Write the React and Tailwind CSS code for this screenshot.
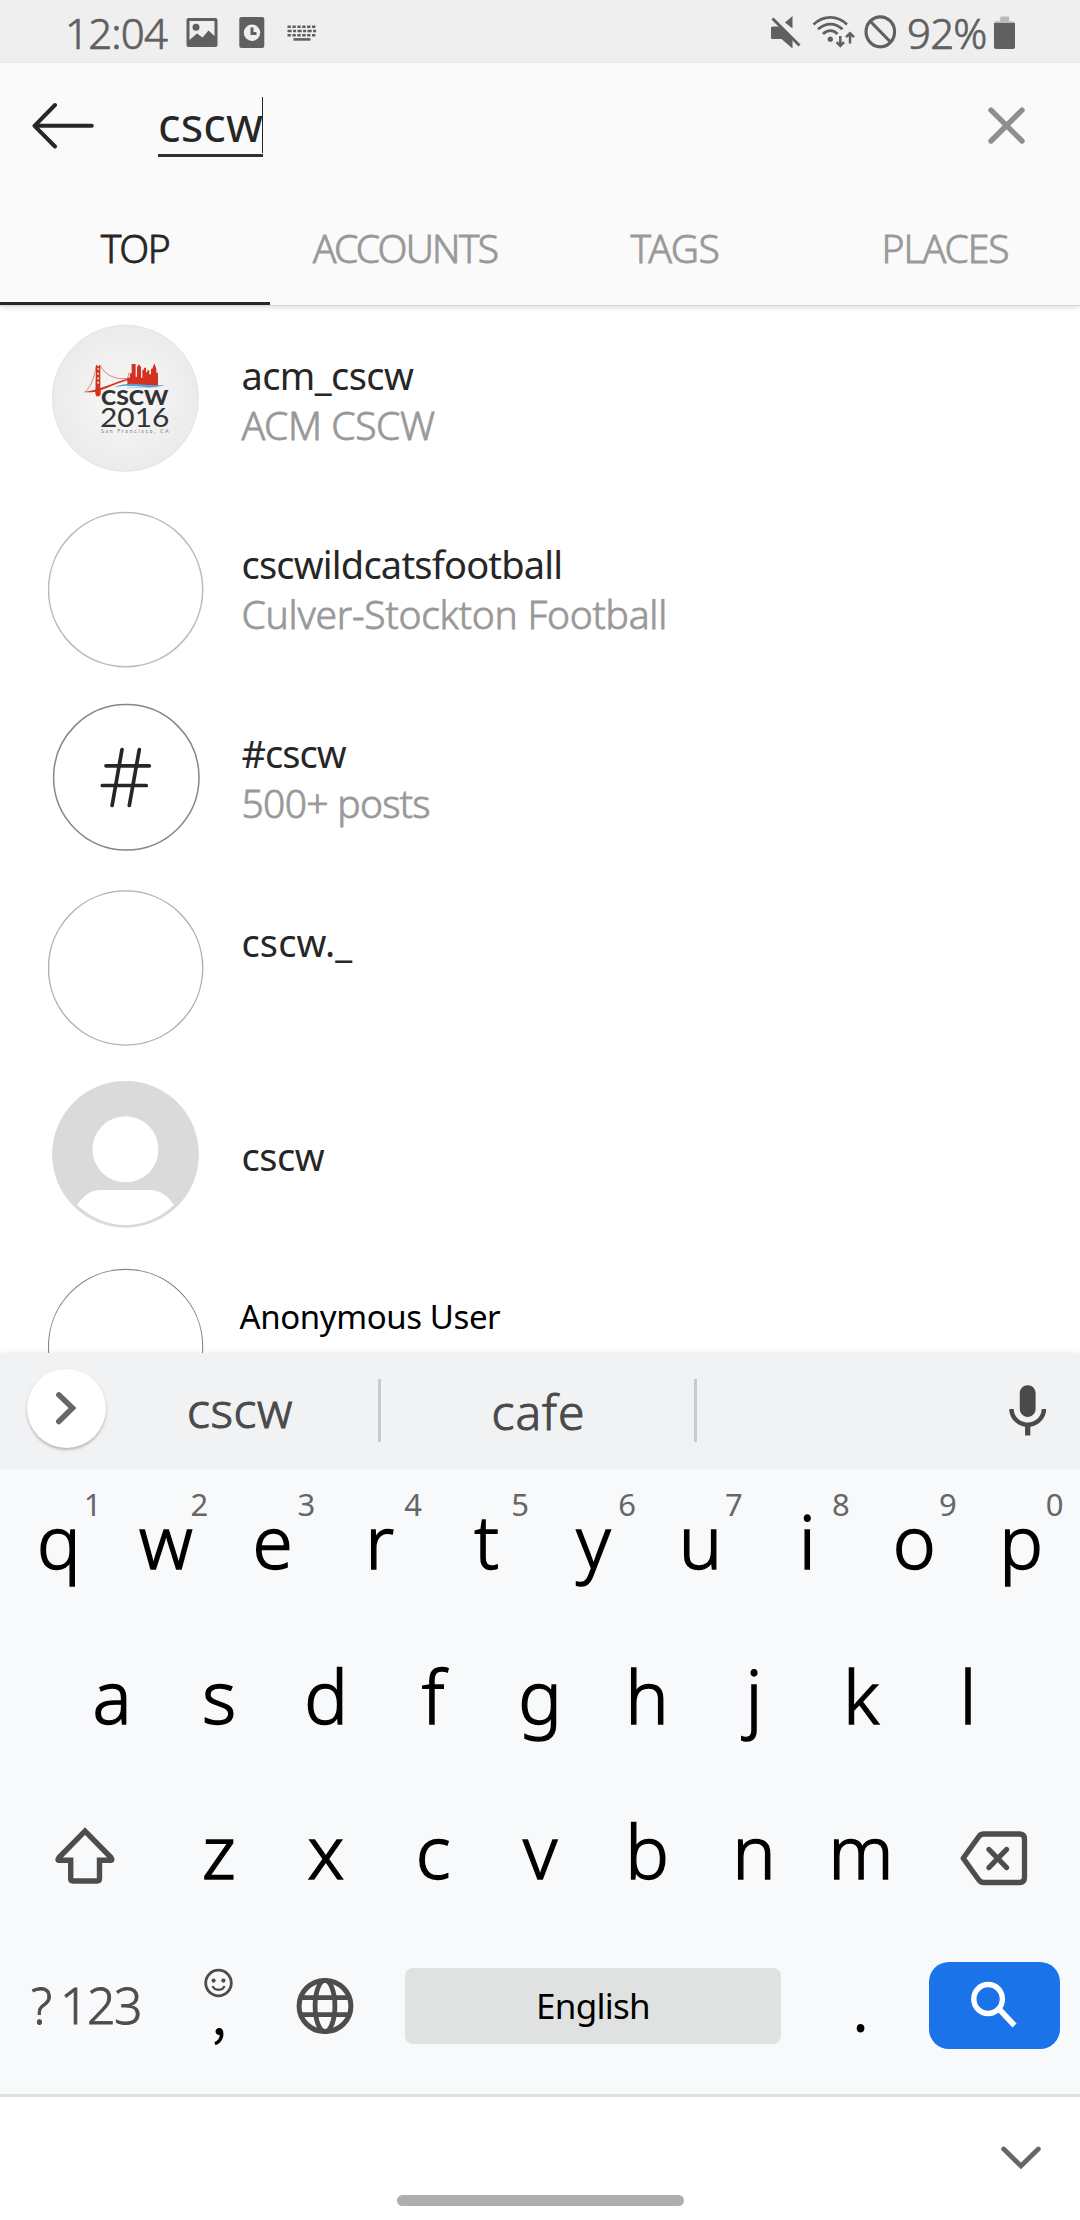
import React from "react";

/* ---------- status bar ---------- */

function StatusBar() {
  return (
    <div className="flex h-[63px] items-start bg-[#efefef] text-[#606060]">
      <span className="ml-[65px] w-[121px] whitespace-nowrap text-[42px] font-light leading-[65px] tracking-[-0.8px] [-webkit-text-stroke:0.7px]">12:04</span>
      <svg className="mt-[18px] h-[29px] w-8" viewBox="0 0 32 29" fill="currentColor">
        <path fillRule="evenodd" d="M2.500 0h27a2 2 0 0 1 2 2v25a2 2 0 0 1-2 2h-27a2 2 0 0 1-2-2V2a2 2 0 0 1 2-2zM3.500 3v19l7.500-6.500 5.500 4 6-7 6 5.500V3z" />
        <circle cx="10" cy="9.300" r="3.500" />
      </svg>
      <svg className="ml-[21px] mt-[17px] h-[31px] w-[26px]" viewBox="0 0 26 31">
        <rect x="0.300" width="25" height="31" rx="2.200" fill="currentColor" />
        <circle cx="13" cy="15.700" r="8.200" fill="#efefef" />
        <path d="M13 10.500v6h4.500" fill="none" stroke="currentColor" strokeWidth="3" />
      </svg>
      <svg className="ml-[22px] mt-6 h-[18px] w-[30px]" viewBox="0 0 30 18" stroke="currentColor" fill="none">
        <path d="M.500 2.800h29M.500 11.200h29" strokeWidth="2.400" strokeDasharray="3.400 1.500" />
        <path d="M.500 7h29" strokeWidth="2.400" strokeDasharray="4.200 1.400 3 1.400" />
        <path d="M6.500 15.400h17" strokeWidth="2.600" />
      </svg>
      <div className="ml-auto flex items-start">
        <svg className="mt-[16px] h-8 w-[30px]" viewBox="0 0 30 32">
          <path d="M1.500 10.500h7L21.500 21v11.500L10.500 23h-9A1.500 1.500 0 0 1 0 21.500V12a1.500 1.500 0 0 1 1.500-1.500zM21.500 0v12.500L14 6.500z" fill="currentColor" />
          <path d="M1.500 2.500l27 27" stroke="currentColor" strokeWidth="3" />
        </svg>
        <svg className="ml-[11px] mt-[15px] h-[33px] w-[43px]" viewBox="0 0 43 33" fill="none" stroke="currentColor" strokeWidth="2.700">
          <path d="M1.500 9.500c10-9.500 24-9.500 33.500 0M6 14.300c7.500-7 17.500-7 24.500 0M11 19c4.500-4.500 10.500-4.500 14.500 0" />
          <circle cx="18.300" cy="24.200" r="2.600" fill="currentColor" stroke="none" />
          <path d="M28.300 21v10M24.600 27.200l3.700 3.800 3.700-3.800M38 28.500v-10M34 22.200l4-3.900 4 3.900" strokeWidth="2.500" />
        </svg>
        <svg className="ml-[9px] mt-[15px] h-[34px] w-[33px]" viewBox="0 0 33 34" fill="none" stroke="currentColor" strokeWidth="3.200">
          <ellipse cx="16.300" cy="16.800" rx="14.300" ry="15" />
          <path d="M6.500 6.500l20 20.500" />
        </svg>
        <span className="ml-[10px] w-[87px] whitespace-nowrap text-[42px] font-light leading-[65px] tracking-[-0.8px] [-webkit-text-stroke:0.7px]">92%</span>
        <svg className="mr-[65px] mt-4 h-[33px] w-[21px]" viewBox="0 0 21 33">
          <path d="M6.200 6V1.500a1 1 0 0 1 1-1h7a1 1 0 0 1 1 1V6zM1.500 5.200h18l1.500 2H0z" fill="#b9b9b9" />
          <path d="M0 7h21v24a2 2 0 0 1-2 2H2a2 2 0 0 1-2-2z" fill="currentColor" />
        </svg>
      </div>
    </div>
  );
}

/* ---------- search header ---------- */

const TABS = [
  { label: "TOP", active: true, tracking: "tracking-[-1.5px]" },
  { label: "ACCOUNTS", tracking: "tracking-[-1.75px]" },
  { label: "TAGS", tracking: "tracking-[-0.4px]" },
  { label: "PLACES", tracking: "tracking-[-1px]" },
];

function Header() {
  return (
    <header className="relative z-10 border-b border-[#d9d9d9] bg-[#fafafa] shadow-[0_2px_5px_rgba(0,0,0,0.12)]">
      <div className="flex h-[127px] items-start">
        <svg className="ml-8 mt-[38px] h-[50px] w-[62px]" viewBox="0 0 62 50" fill="none" stroke="#262626" strokeWidth="4" strokeLinecap="round" strokeLinejoin="round">
          <path d="M59.800 24.800H2.500M23 4L2.500 24.800 23 45.500" />
        </svg>
        <div className="relative ml-16 mt-[34px] h-[60px] w-[105px] whitespace-nowrap border-b-[3px] border-[#303030] text-[47px] leading-[54px] tracking-[0.1px] text-[#262626]">
          cscw
          <span className="absolute right-0 top-0 h-[56px] w-px bg-[#262626]" />
        </div>
        <svg className="ml-auto mr-[55px] mt-[44px] h-[37px] w-[37px]" viewBox="0 0 37 37" stroke="#8f8f8f" strokeWidth="5.400" strokeLinecap="round">
          <path d="M3 3.200l31 30.800M34 3.200L3 34" />
        </svg>
      </div>
      <nav className="grid h-[115px] grid-cols-4">
        {TABS.map((t) => (
          <div
            key={t.label}
            className={`${t.tracking} ${t.active ? "border-b-[3px] border-[#262626] text-[#262626]" : "text-[#999]"} h-[115px] text-center text-[39px] font-light leading-[115px] [-webkit-text-stroke:0.8px]`}
          >
            {t.label}
          </div>
        ))}
      </nav>
    </header>
  );
}

/* ---------- avatars (156 x 189 drawing area, one per row) ---------- */

function LogoAvatar() {
  return (
    <>
      <defs>
        <radialGradient id="paper">
          <stop offset="0" stopColor="#f8f8f8" />
          <stop offset="1" stopColor="#ebebeb" />
        </radialGradient>
      </defs>
      <circle cx="77.400" cy="94.300" r="73" fill="url(#paper)" stroke="#dcdcdc" strokeWidth="0.700" />
      <g transform="translate(-8 11) scale(0.3333)">
        <g fill="#d4321f">
          <path d="M168 150h4v4h5v-4h4v78l-2 16h-10l-3-8z" />
          <path d="M130 231c22-3 38-7 52-12 35-12 55-22 82-28v5c-30 8-50 18-82 30v14h-14v-10c-14 2-26 3-38 1z" />
          <path d="M262 213v-23l8-3v-12h5v-28h12v38h4v-29l6-8 6 8v32h4v-24h5v-6h6v14h4v-6h6v12h5v-17h4l6-16 6 16v12h5v40z" />
        </g>
        <path d="M172 162h5M172 176h5M172 190h5M172 203h5" stroke="#eee" strokeWidth="5" />
        <path d="M181 152c12 24 40 44 84 38M168 154c-4 30-14 60-32 76M262 192l6-20" fill="none" stroke="#c8503f" strokeWidth="2" />
        <path d="M222 217c30-12 52-12 78-9 26 3 50 4 76 2-30 9-58 7-84 4-26-3-46-2-70 3z" fill="#4fa3dc" />
        <path d="M262 219c28-5 50 1 88-3" fill="none" stroke="#7dbbe6" strokeWidth="2" />
        <text x="183" y="270" fontFamily="Lato, sans-serif" fontWeight="900" fontSize="61" textLength="202" lengthAdjust="spacingAndGlyphs" fill="#333">CSCW</text>
        <text x="180" y="336" fontFamily="Lato, sans-serif" fontWeight="400" fontSize="80" textLength="208" lengthAdjust="spacingAndGlyphs" fill="#333">2016</text>
        <text x="183" y="355" fontFamily="Lato, sans-serif" fontSize="15" textLength="203" fill="#777">San Francisco, CA</text>
      </g>
    </>
  );
}

function HashAvatar() {
  return (
    <>
      <circle cx="78.300" cy="95.300" r="72.700" fill="#fff" stroke="#868686" strokeWidth="1.500" />
      <path d="M74 67.500l-9.900 56M91.300 67.500l-10 56M58 83.800h43.300M54.300 103.500h44" fill="none" stroke="#262626" strokeWidth="3.700" strokeLinecap="round" />
    </>
  );
}

function PersonAvatar() {
  return (
    <>
      <circle cx="77.500" cy="94.300" r="73.400" fill="#dadada" />
      <circle cx="77.500" cy="89.300" r="33" fill="#fff" />
      <path d="M29 145Q39 130 53 130H102Q116 130 126 145Q104 165 77.500 165Q51 165 29 145z" fill="#fff" />
    </>
  );
}

const Ring = ({ cy, width, color }) => <circle cx="77.600" cy={cy} r="77.100" fill="#fff" stroke={color} strokeWidth={width} />;

/* ---------- results ---------- */

const RESULTS = [
  { avatar: <LogoAvatar />, name: "acm_cscw", sub: "ACM CSCW", nameCls: "tracking-[-0.6px]", subCls: "tracking-[-0.4px]" },
  { avatar: <Ring cy={96.6} width={1.6} color="#bcbcbc" />, name: "cscwildcatsfootball", sub: "Culver-Stockton Football", nameCls: "tracking-[-0.8px]", subCls: "tracking-[-0.22px]" },
  { avatar: <HashAvatar />, name: "#cscw", sub: "500+ posts", nameCls: "tracking-[-1px]", subCls: "tracking-[-0.7px]" },
  { avatar: <Ring cy={97} width={1.4} color="#b0b0b0" />, name: "cscw._", nameCls: "tracking-[0.1px]" },
  { avatar: <PersonAvatar />, name: "cscw", pad: "pt-[71px]", nameCls: "tracking-[-0.5px]" },
  { avatar: <Ring cy={97.5} width={1.1} color="#858585" />, name: "Anonymous User", pad: "pt-[43px] -ml-0.5", nameCls: "text-[33px] tracking-[-0.4px] text-black" },
];

function ResultRow({ avatar, name, sub, nameCls, subCls, pad = "pt-[46px]" }) {
  return (
    <li className="flex h-[189px]">
      <svg className="ml-12 mr-[37.500px] h-[189px] w-[156px]" viewBox="0 0 156 189">
        {avatar}
      </svg>
      <div className={`${pad} whitespace-nowrap leading-[50px]`}>
        <div className={`${nameCls} ${nameCls.includes("text-[") ? "" : "text-[38px] text-[#262626]"}`}>{name}</div>
        {sub && <div className={`${subCls} text-[39px] font-light text-[#999] [-webkit-text-stroke:0.8px]`}>{sub}</div>}
      </div>
    </li>
  );
}

/* ---------- keyboard ---------- */

function Suggestions() {
  const word = "text-center text-[48px] font-light text-[#4a4a4a] [-webkit-text-stroke:1px]";
  return (
    <div className="flex h-[116px] items-start bg-[#f1f2f4] shadow-[0_-2px_5px_rgba(0,0,0,0.05)]">
      <div className="ml-[27px] mt-[16px] size-[79px] rounded-full bg-white shadow-[0_2px_3px_rgba(0,0,0,0.25)]">
        <svg className="size-[79px]" viewBox="0 0 79 79" fill="none" stroke="#666" strokeWidth="5.500">
          <path d="M31.800 25.800L45.500 39 31.800 52.500" strokeLinecap="round" />
        </svg>
      </div>
      <div className={`${word} w-[272px] pr-1 leading-[114px] tracking-[0.6px]`}>cscw</div>
      <div className="mt-[26px] h-[63px] w-[3px] bg-[#c9cacc]" />
      <div className={`${word} w-[313px] pl-0.5 leading-[117px] tracking-[1px]`}>cafe</div>
      <div className="mt-[26px] h-[63px] w-[3px] bg-[#c9cacc]" />
      <svg className="ml-auto mr-[20.800px] mt-[26.700px] size-[63.400px]" viewBox="0 0 24 24" fill="#4a4a4a">
        <path d="M12 14c1.660 0 2.990-1.340 2.990-3L15 5c0-1.660-1.340-3-3-3S9 3.340 9 5v6c0 1.660 1.340 3 3 3zm5.300-3c0 3-2.540 5.100-5.300 5.100S6.700 14 6.700 11H5c0 3.410 2.720 6.230 6 6.720V21h2v-3.280c3.280-.480 6-3.300 6-6.720h-1.700z" />
      </svg>
    </div>
  );
}

function Key({ letter, hint }) {
  return (
    <div className="relative h-[155px] w-[107px] text-center text-[73px] font-light leading-[143px] text-black [-webkit-text-stroke:1.400px_#000]">
      {letter}
      {hint && <span className="absolute left-[72px] top-[15px] w-[30px] text-[31px] font-normal leading-10 text-[#666] [-webkit-text-stroke:0px]">{hint}</span>}
    </div>
  );
}

function Keyboard() {
  return (
    <div className="h-[628px] border-b-[3px] border-[#dfe1e1] bg-[#f8f9fb]">
      <div className="flex px-[5.500px]">
        {[..."qwertyuiop"].map((c, i) => <Key key={c} letter={c} hint={String((i + 1) % 10)} />)}
      </div>
      <div className="flex justify-center">
        {[..."asdfghjkl"].map((c) => <Key key={c} letter={c} />)}
      </div>
      <div className="flex items-start">
        <svg className="ml-[55px] mr-[50.500px] mt-[47px] h-[60px] w-[60px]" viewBox="0 0 60 60" fill="none" stroke="#4d4d4d" strokeWidth="5.400">
          <path d="M30 5.200L4 31.500Q2 34.300 4 34.300H15.700V52.500Q15.700 55 18.200 55H42Q44.500 55 44.500 52.500V34.300H55.500Q58 34.300 56 31.500z" />
        </svg>
        {[..."zxcvbnm"].map((c) => <Key key={c} letter={c} />)}
        <svg className="ml-[45.500px] mt-[51px] h-[56px] w-[68px]" viewBox="0 0 68 56" fill="none" stroke="#4d4d4d" strokeWidth="5.300" strokeLinejoin="round">
          <path d="M23.500 4H59.500Q64.500 4 64.500 9V47.500Q64.500 52.500 59.500 52.500H23.500Q20.500 52.500 18.500 49.500L3.200 28.300 18.500 7Q20.500 4 23.500 4z" />
          <path d="M29 19.500L46.500 37.500M46.500 19.500L29 37.500" strokeLinecap="round" />
        </svg>
      </div>
      <div className="flex items-start">
        <div className="flex w-[165.500px] pl-[31px] text-[50px] font-light leading-[143px] text-[#4d4d4d] [-webkit-text-stroke:0.800px]">
          <span className="w-[29px]">?</span>
          <span className="tracking-[-1.6px]">123</span>
        </div>
        <div className="relative w-[107px] text-center text-black">
          <svg className="absolute left-[37px] top-[34px] size-[31px]" viewBox="0 0 31 31" fill="none" stroke="#4d4d4d">
            <circle cx="15.500" cy="15" r="12.800" strokeWidth="2.800" />
            <path d="M9.700 18c1.500 5 10.200 5 11.700 0" strokeWidth="2.400" />
            <g fill="#4d4d4d" stroke="none">
              <circle cx="10.600" cy="12.600" r="2.100" />
              <circle cx="20.400" cy="12.600" r="2.100" />
            </g>
          </svg>
          <span className="font-['Noto_Sans_CJK_KR',sans-serif] text-[54px] leading-[156px]">,</span>
        </div>
        <svg className="ml-[22.500px] mt-[43px] size-[60px]" viewBox="0 0 60 60" fill="none" stroke="#4d4d4d" strokeWidth="5">
          <ellipse cx="30" cy="29" rx="25.900" ry="25.600" />
          <ellipse cx="30" cy="29" rx="9.900" ry="25.600" strokeWidth="4.800" />
          <path d="M5.500 20.600h49M5.500 37.600h49" strokeWidth="4.700" />
        </svg>
        <div className="ml-[50px] mt-[34px] h-[76px] w-[376px] rounded-[8px] bg-[#e0e2e1] text-center text-[35px] leading-[75px] tracking-[-0.75px] text-black">English</div>
        <div className="ml-[26px] w-[107px] text-center text-[62px] leading-[148px] text-black">.</div>
        <div className="ml-[15px] mt-[28px] h-[87px] w-[131px] rounded-[20px] bg-[#1b73e9]">
          <svg className="h-[87px] w-[131px]" viewBox="0 0 131 87" fill="none" stroke="#fff">
            <ellipse cx="59.100" cy="37" rx="14.300" ry="14.500" strokeWidth="5.400" />
            <path d="M70.500 47.500L85.500 63.500" strokeWidth="5.600" />
          </svg>
        </div>
      </div>
    </div>
  );
}

export default function App() {
  return (
    <div className="flex h-[2220px] w-[1080px] flex-col overflow-hidden bg-white font-['Noto_Sans',sans-serif]">
      <StatusBar />
      <Header />
      <ul className="-mt-0.5 h-[1049px] overflow-hidden">
        {RESULTS.map((r, i) => <ResultRow key={i} {...r} />)}
      </ul>
      <div className="relative">
        <Suggestions />
        <Keyboard />
      </div>
      <div className="flex flex-1 flex-col items-center bg-white">
        <svg className="mr-[36px] mt-[47px] h-[27px] w-[46px] self-end" viewBox="0 0 46 27" fill="none" stroke="#666" strokeWidth="4.800" strokeLinecap="round">
          <path d="M5.700 5L23 22 40.300 5" />
        </svg>
        <div className="mt-[24px] h-[11px] w-[287px] rounded-full bg-[#aeaeae]" />
      </div>
    </div>
  );
}
